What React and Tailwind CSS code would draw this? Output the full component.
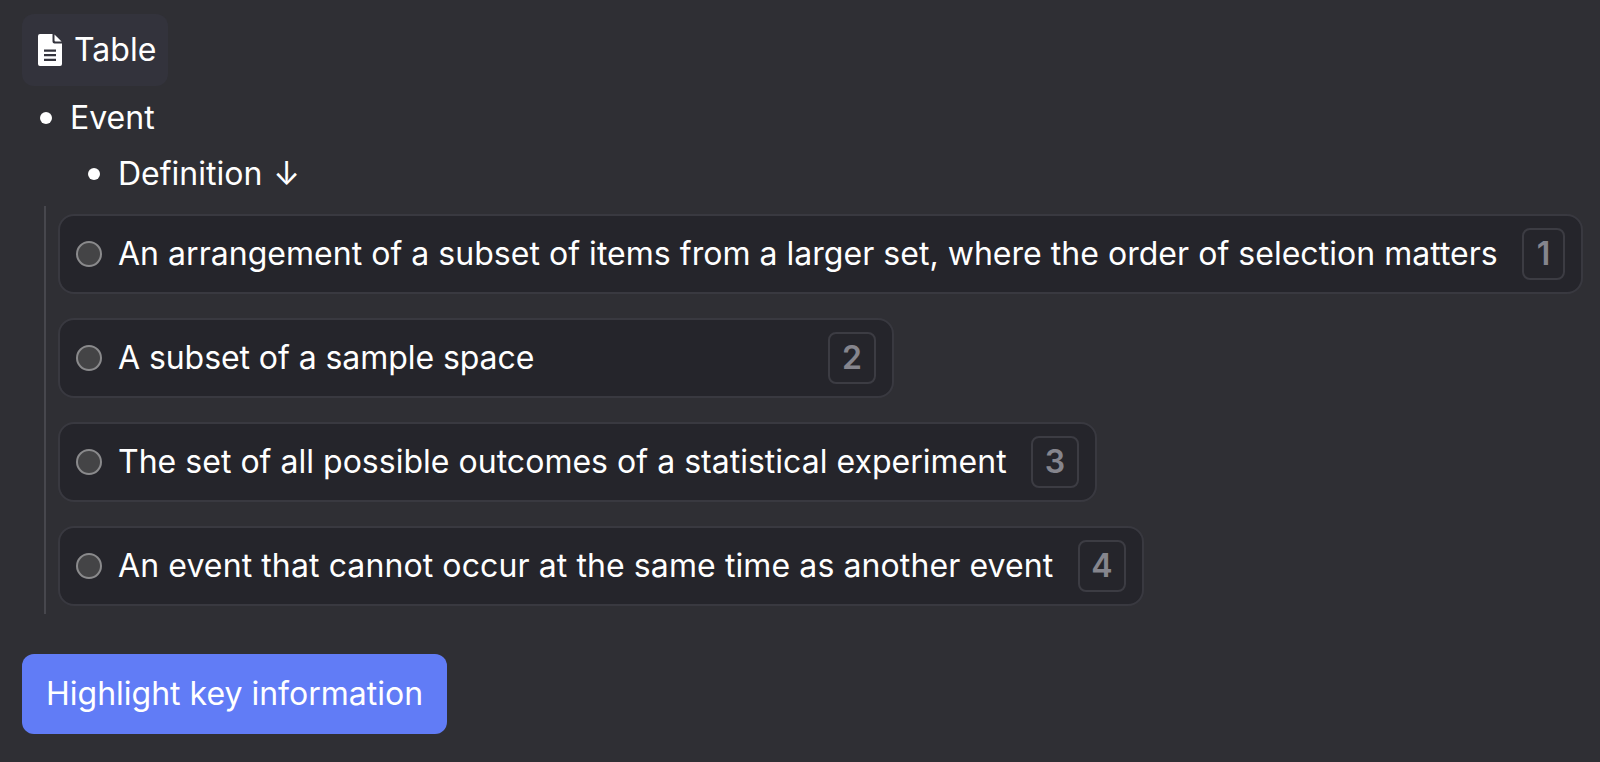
import React from "react";

const options = [
  { text: "An arrangement of a subset of items from a larger set, where the order of selection matters", key: 1, textClass: "w-[1379px] tracking-[0.03px]", keyClass: "w-[43px]" },
  { text: "A subset of a sample space", key: 2, textClass: "w-[685px] tracking-[-0.07px]", keyClass: "w-[48px]" },
  { text: "The set of all possible outcomes of a statistical experiment", key: 3, textClass: "w-[888px] tracking-[0.02px]", keyClass: "w-[48px]" },
  { text: "An event that cannot occur at the same time as another event", key: 4, textClass: "w-[935px] tracking-[0.1px]", keyClass: "w-[48px]" },
];

const DocIcon = () => (
  <svg width="24" height="32" viewBox="0 0 24 32" className="shrink-0">
    <path
      fillRule="evenodd"
      fill="#ffffff"
      d="M2 0h12.5v7.5a2 2 0 0 0 2 2H24V30a2 2 0 0 1-2 2H2a2 2 0 0 1-2-2V2a2 2 0 0 1 2-2ZM6 15.5v2.2h12v-2.2H6Zm0 4.6v2.2h12v-2.2H6Zm0 4.6v2.2h12v-2.2H6Z"
    />
    <path fill="#ffffff" d="M16.5 0.5 23.6 7.6h-6.1a1 1 0 0 1-1-1Z" />
  </svg>
);

const Option = ({ text, num, textClass, keyClass }) => (
  <div className="flex items-center w-fit h-[80px] pl-[16px] pr-[16px] bg-[#25252b] border-2 border-[#393940] rounded-[16px]">
    <span className="w-[26px] h-[26px] rounded-full bg-[#444446] border-2 border-[#8a8a8c] shrink-0" />
    <span className={`ml-[16px] mr-[25px] whitespace-nowrap text-white ${textClass}`}>{text}</span>
    <span className={`h-[52px] flex items-center justify-center rounded-[8px] border-2 border-[#3c3c43] text-[#85858d] font-semibold shrink-0 ${keyClass}`}>
      {num}
    </span>
  </div>
);

export default function App() {
  return (
    <div
      className="w-[1600px] h-[762px] overflow-hidden bg-[#2f2f34] pl-[22px] pt-[14px] text-white text-[32px] leading-[40px]"
      style={{ fontFamily: "Inter, sans-serif" }}
    >
      <div className="flex items-center gap-[12px] w-[146px] h-[72px] pl-[16px] rounded-[12px] bg-[#33333c]">
        <DocIcon />
        <span>Table</span>
      </div>

      <ul className="mt-[12px]">
        <li className="flex items-center h-[40px] pl-[18px]">
          <span className="w-[12px] h-[12px] rounded-full bg-white" />
          <span className="ml-[18px]">Event</span>
        </li>
        <li className="flex items-center h-[40px] mt-[16px] pl-[66px]">
          <span className="w-[12px] h-[12px] rounded-full bg-white" />
          <span className="ml-[18px]">Definition</span>
          <span className="ml-[11px]">↓</span>
        </li>
      </ul>

      <div className="ml-[22px] mt-[12px] h-[408px] pt-[8px] pl-[12px] border-l-2 border-[#47474d] flex flex-col gap-[24px]">
        {options.map((o) => (
          <Option key={o.key} text={o.text} num={o.key} textClass={o.textClass} keyClass={o.keyClass} />
        ))}
      </div>

      <button className="block mt-[40px] w-[425px] h-[80px] rounded-[12px] bg-[#617cf6] text-white text-center">
        Highlight key information
      </button>
    </div>
  );
}
